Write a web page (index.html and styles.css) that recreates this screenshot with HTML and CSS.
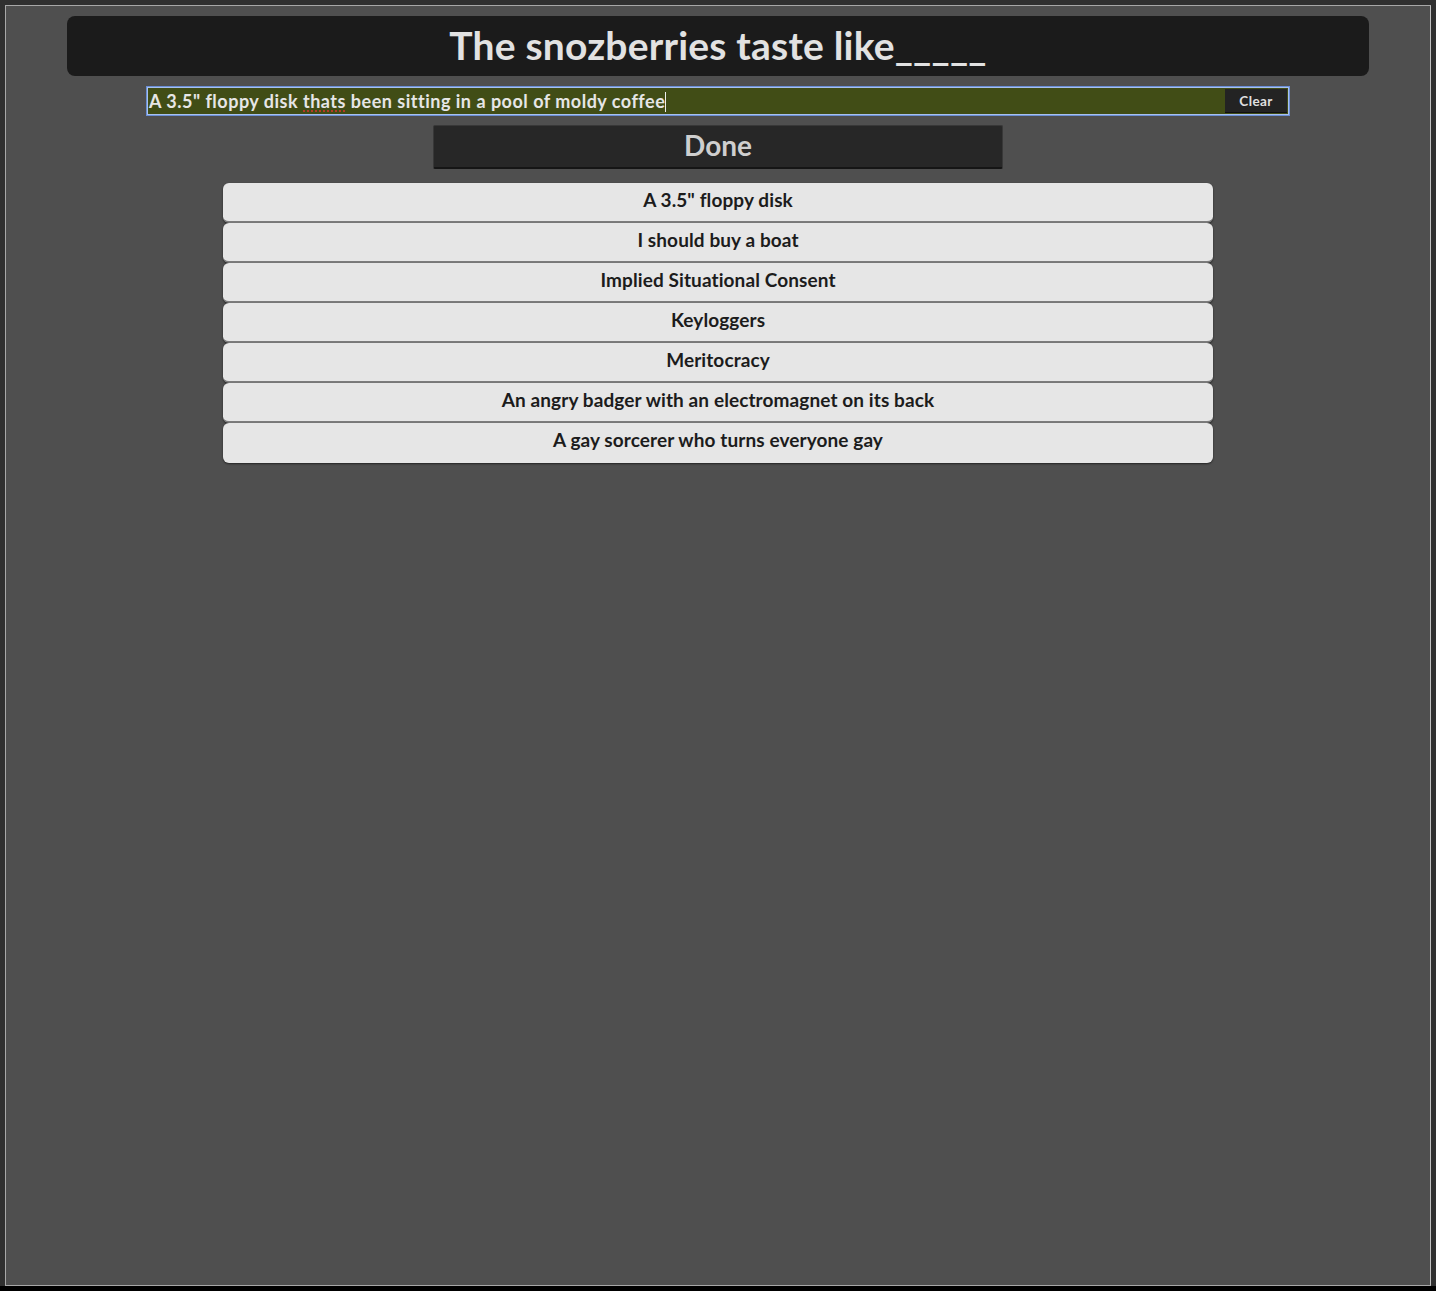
FILE: index.html
```html
<!DOCTYPE html>
<html>
<head>
<meta charset="utf-8">
<link rel="stylesheet" href="styles.css">
</head>
<body>
<div class="page">
  <div class="frame">
    <div class="header"><h1 class="title">The snozberries taste like_____</h1></div>
    <div class="entry">
      <div class="entry-text">A 3.5" floppy disk <span class="misspelt">thats</span> been sitting in a pool of moldy coffee<span class="caret"></span></div>
      <button class="clear">Clear</button>
    </div>
    <div class="done-row"><button class="done">Done</button></div>
    <ul class="cards">
      <li class="card">A 3.5" floppy disk</li>
      <li class="card">I should buy a boat</li>
      <li class="card">Implied Situational Consent</li>
      <li class="card">Keyloggers</li>
      <li class="card">Meritocracy</li>
      <li class="card">An angry badger with an electromagnet on its back</li>
      <li class="card">A gay sorcerer who turns everyone gay</li>
    </ul>
  </div>
</div>
</body>
</html>
```

FILE: styles.css
```css
html, body {
  margin: 0;
  padding: 0;
  background: #000;
}
body {
  font-family: "Lato", "Open Sans", sans-serif;
}
.page {
  height: 1286px;
  padding: 5px 5px 0 5px;
  box-sizing: border-box;
  background: #303030;
}
.frame {
  height: 1281px;
  box-sizing: border-box;
  border: 1px solid #a8a8a8;
  border-right-color: #c0c0c0;
  background: #4f4f4f;
  padding-top: 10px;
  display: flex;
  flex-direction: column;
  align-items: center;
}
.header {
  width: 1302px;
  height: 60px;
  box-sizing: border-box;
  padding-bottom: 3px;
  background: #1b1b1b;
  border-radius: 8px;
  display: flex;
  align-items: center;
  justify-content: center;
}
.title {
  margin: 0;
  color: #e2e2e2;
  font-size: 39px;
  font-weight: 700;
  letter-spacing: 0.2px;
}
.entry {
  margin-top: 10px;
  width: 1144px;
  height: 30px;
  box-sizing: border-box;
  border: 1px solid #6a8fd6;
  box-shadow: inset 0 0 0 1px #a9c1ee;
  background: #414d16;
  display: flex;
  align-items: center;
  padding: 2px;
}
.entry-text {
  flex: 1;
  color: #e6e6e6;
  font-size: 18px;
  font-weight: 700;
  letter-spacing: 0.5px;
  white-space: nowrap;
  line-height: 24px;
}
.misspelt {
  text-decoration: underline dotted #c0392b;
  text-underline-offset: 3px;
}
.caret {
  display: inline-block;
  width: 1px;
  height: 20px;
  background: #eee;
  vertical-align: -4px;
  margin-left: -0.5px;
}
.clear {
  width: 62px;
  height: 24px;
  border: none;
  border-bottom: 1px solid #111;
  background: #232323;
  color: #e0e0e0;
  font-family: inherit;
  font-size: 13.5px;
  font-weight: 700;
  letter-spacing: 0.4px;
  padding: 0;
}
.done-row {
  margin-top: 9px;
}
.done {
  width: 570px;
  height: 44px;
  box-sizing: border-box;
  background: #272727;
  border: 1px solid #383838;
  border-bottom: 2px solid #151515;
  border-radius: 2px;
  color: #cfcfcf;
  font-family: inherit;
  font-size: 28px;
  font-weight: 700;
  padding: 0 0 3px 0;
}
.cards {
  list-style: none;
  margin: 14px 0 0 0;
  padding: 0;
  width: 990px;
}
.card {
  height: 40px;
  box-sizing: border-box;
  background: #e6e6e6;
  border-radius: 6px;
  border-bottom: 2px solid #7c7c7c;
  box-shadow: 0 1px 2px rgba(0,0,0,0.55);
  display: flex;
  align-items: center;
  justify-content: center;
  color: #1c1c1c;
  font-size: 19px;
  font-weight: 700;
  letter-spacing: 0.1px;
  padding-bottom: 5px;
}
.card:last-child {
  border-bottom: none;
  padding-bottom: 7px;
}
```
